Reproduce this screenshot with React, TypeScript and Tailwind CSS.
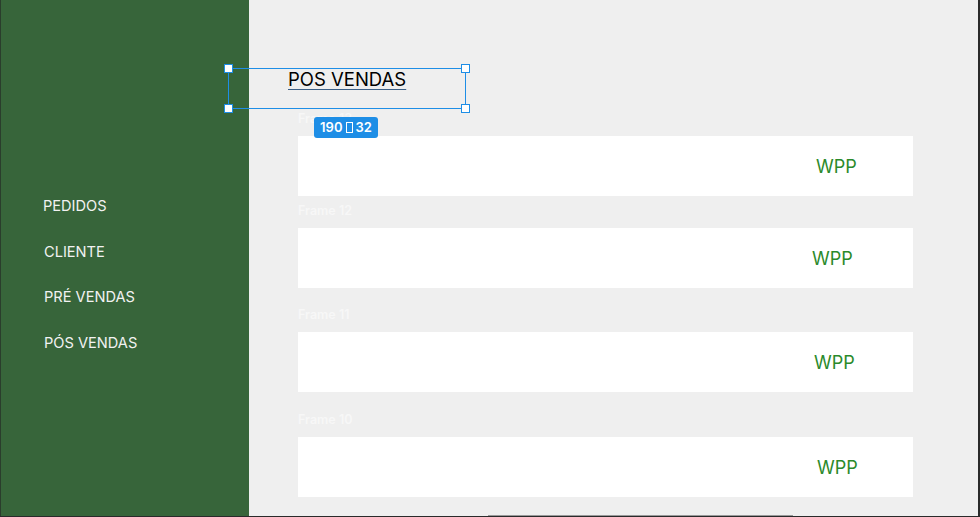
import React from "react";

const font = { fontFamily: "Inter, 'Noto Sans', sans-serif" };

function Card({ label, wppLeft, mt }: { label: string; wppLeft: string; mt: string }) {
  return (
    <div className={mt}>
      <div className="h-[20px] text-[12.5px] font-semibold leading-[6px] text-[#f7f7f7] pl-[49px]">{label}</div>
      <div className="ml-[49px] w-[615px] h-[60px] bg-white flex items-center">
        <span className={`${wppLeft} text-[18px] text-[#2b8a2b]`}>WPP</span>
      </div>
    </div>
  );
}

export default function App() {
  return (
    <div className="w-[980px] h-[517px] flex overflow-hidden bg-[#2a2a2a]" style={font}>
      <aside className="w-[249px] h-[516px] bg-[#37653a] border-l border-[#2a3d2c] flex flex-col pt-[196px] pl-[42px] gap-[25.5px]">
        <div className="text-[14.6px] leading-[20px] text-[#f2f2f2]">PEDIDOS</div>
        <div className="text-[14.6px] leading-[20px] text-[#f2f2f2] pl-[1px]">CLIENTE</div>
        <div className="text-[14.6px] leading-[20px] text-[#f2f2f2] pl-[1px]">PRÉ VENDAS</div>
        <div className="text-[14.6px] leading-[20px] text-[#f2f2f2] pl-[1px]">PÓS VENDAS</div>
      </aside>
      <main className="relative w-[729px] h-[516px] bg-[#efefef] flex flex-col">
        <div className="pt-[67px] pl-[39px] h-[96px]">
          <span className="text-[18.5px] leading-[24px] text-black underline decoration-[#3b5f86] underline-offset-[3px]">POS VENDAS</span>
        </div>
        <Card label="Frame 13" wppLeft="ml-[518px]" mt="mt-[20px]" />
        <Card label="Frame 12" wppLeft="ml-[514px]" mt="mt-[12px]" />
        <Card label="Frame 11" wppLeft="ml-[516px]" mt="mt-[24px]" />
        <Card label="Frame 10" wppLeft="ml-[519px]" mt="mt-[25px]" />

        {/* selection overlay */}
        <div className="absolute left-[-21px] top-[68px] w-[238px] h-[41px] border border-[#1e8ee6]" />
        <div className="absolute left-[-25px] top-[64px] w-[9px] h-[9px] bg-white border border-[#1e8ee6]" />
        <div className="absolute left-[212px] top-[64px] w-[9px] h-[9px] bg-white border border-[#1e8ee6]" />
        <div className="absolute left-[-25px] top-[104px] w-[9px] h-[9px] bg-white border border-[#1e8ee6]" />
        <div className="absolute left-[212px] top-[104px] w-[9px] h-[9px] bg-white border border-[#1e8ee6]" />
        <div className="absolute left-[65px] top-[117px] w-[64px] h-[21px] rounded-[3px] bg-[#1e8ee6] text-white text-[13px] font-semibold flex items-center justify-center gap-[3px]">
          <span>190</span>
          <span className="inline-block w-[7px] h-[11px] border border-white" />
          <span>32</span>
        </div>
        <div className="absolute left-[239px] bottom-0 w-[305px] h-[1px] bg-[#9a9a9a]" />
      </main>
    </div>
  );
}
